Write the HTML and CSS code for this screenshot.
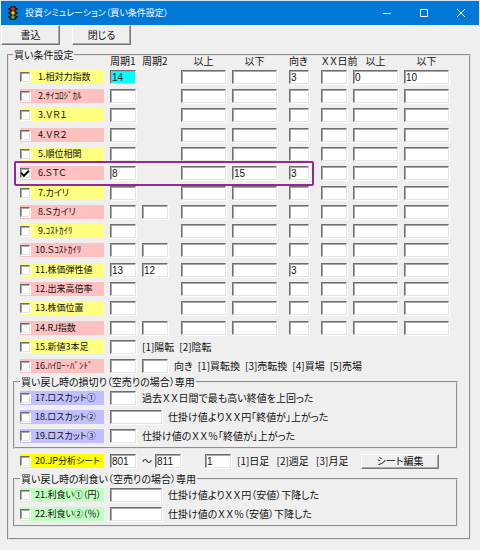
FILE: index.html
```html
<!DOCTYPE html>
<html lang="ja">
<head>
<meta charset="utf-8">
<title>投資シミュレーション（買い条件設定）</title>
<link rel="stylesheet" href="styles.css">
</head>
<body>
<header class="titlebar">
  <svg class="app-icon" viewBox="0 0 12 14" aria-hidden="true">
    <path d="M1 2h10v1L9 5H3L1 3zM1 6h10v1L9 9H3L1 7zM1 10h10v1l-2 2H3l-2-2z" fill="#222"/>
    <rect x="3" y="0" width="6" height="14" rx="1" fill="#2b2620"/>
    <circle cx="6" cy="3" r="1.7" fill="#e8281c"/>
    <circle cx="6" cy="7" r="1.7" fill="#f2d21c"/>
    <circle cx="6" cy="11" r="1.7" fill="#2fc34a"/>
  </svg>
  <h1>投資シミュレーション（買い条件設定）</h1>
  <div class="window-buttons">
    <button type="button" aria-label="最小化"><svg viewBox="0 0 10 10"><path d="M1 5.5h8"/></svg></button>
    <button type="button" aria-label="最大化"><svg viewBox="0 0 10 10"><path d="M1.5 1.5h7v7h-7z"/></svg></button>
    <button type="button" aria-label="閉じる"><svg viewBox="0 0 10 10"><path d="M1 1l8 8M9 1l-8 8"/></svg></button>
  </div>
</header>
<nav class="toolbar">
  <button type="button" class="btn">書込</button>
  <button type="button" class="btn">閉じる</button>
</nav>
<main>
<fieldset class="conditions">
  <legend>買い条件設定</legend>
  <div class="row head">
    <span class="p1">周期1</span><span class="p2">周期2</span><span class="lo">以上</span><span class="hi">以下</span><span class="dir">向き</span><span class="ago">ＸＸ日前</span><span class="lo2">以上</span><span class="hi2">以下</span>
  </div>
  <div class="rows main-rows">
    <div class="row">
      <label class="tag short yellow"><input type="checkbox">1.相対力指数</label>
      <input class="p1 active" aria-label="周期1" value="14"><input class="lo" aria-label="以上"><input class="hi" aria-label="以下"><input class="dir" aria-label="向き" value="3"><input class="ago" aria-label="XX日前"><input class="lo2" aria-label="以上" value="0"><input class="hi2" aria-label="以下" value="10">
    </div>
    <div class="row">
      <label class="tag short pink"><input type="checkbox">2.ｻｲｺﾛｼﾞｶﾙ</label>
      <input class="p1" aria-label="周期1"><input class="lo" aria-label="以上"><input class="hi" aria-label="以下"><input class="dir" aria-label="向き"><input class="ago" aria-label="XX日前"><input class="lo2" aria-label="以上"><input class="hi2" aria-label="以下">
    </div>
    <div class="row">
      <label class="tag short yellow"><input type="checkbox">3.ＶＲ１</label>
      <input class="p1" aria-label="周期1"><input class="lo" aria-label="以上"><input class="hi" aria-label="以下"><input class="dir" aria-label="向き"><input class="ago" aria-label="XX日前"><input class="lo2" aria-label="以上"><input class="hi2" aria-label="以下">
    </div>
    <div class="row">
      <label class="tag short pink"><input type="checkbox">4.ＶＲ２</label>
      <input class="p1" aria-label="周期1"><input class="lo" aria-label="以上"><input class="hi" aria-label="以下"><input class="dir" aria-label="向き"><input class="ago" aria-label="XX日前"><input class="lo2" aria-label="以上"><input class="hi2" aria-label="以下">
    </div>
    <div class="row">
      <label class="tag short yellow"><input type="checkbox">5.順位相関</label>
      <input class="p1" aria-label="周期1"><input class="lo" aria-label="以上"><input class="hi" aria-label="以下"><input class="dir" aria-label="向き"><input class="ago" aria-label="XX日前"><input class="lo2" aria-label="以上"><input class="hi2" aria-label="以下">
    </div>
    <div class="row marked">
      <label class="tag short pink"><input type="checkbox" checked>6.ＳＴＣ</label>
      <input class="p1" aria-label="周期1" value="8"><input class="lo" aria-label="以上"><input class="hi" aria-label="以下" value="15"><input class="dir" aria-label="向き" value="3"><input class="ago" aria-label="XX日前"><input class="lo2" aria-label="以上"><input class="hi2" aria-label="以下">
    </div>
    <div class="row">
      <label class="tag short yellow"><input type="checkbox">7.カイリ</label>
      <input class="p1" aria-label="周期1"><input class="lo" aria-label="以上"><input class="hi" aria-label="以下"><input class="dir" aria-label="向き"><input class="ago" aria-label="XX日前"><input class="lo2" aria-label="以上"><input class="hi2" aria-label="以下">
    </div>
    <div class="row">
      <label class="tag short pink"><input type="checkbox">8.Ｓカイリ</label>
      <input class="p1" aria-label="周期1"><input class="p2" aria-label="周期2"><input class="lo" aria-label="以上"><input class="hi" aria-label="以下"><input class="dir" aria-label="向き"><input class="ago" aria-label="XX日前"><input class="lo2" aria-label="以上"><input class="hi2" aria-label="以下">
    </div>
    <div class="row">
      <label class="tag short yellow"><input type="checkbox">9.ｺｽﾄｶｲﾘ</label>
      <input class="p1" aria-label="周期1"><input class="lo" aria-label="以上"><input class="hi" aria-label="以下"><input class="dir" aria-label="向き"><input class="ago" aria-label="XX日前"><input class="lo2" aria-label="以上"><input class="hi2" aria-label="以下">
    </div>
    <div class="row">
      <label class="tag pink"><input type="checkbox">10.Ｓｺｽﾄｶｲﾘ</label>
      <input class="p1" aria-label="周期1"><input class="p2" aria-label="周期2"><input class="lo" aria-label="以上"><input class="hi" aria-label="以下"><input class="dir" aria-label="向き"><input class="ago" aria-label="XX日前"><input class="lo2" aria-label="以上"><input class="hi2" aria-label="以下">
    </div>
    <div class="row">
      <label class="tag yellow"><input type="checkbox">11.株価弾性値</label>
      <input class="p1" aria-label="周期1" value="13"><input class="p2" aria-label="周期2" value="12"><input class="lo" aria-label="以上"><input class="hi" aria-label="以下"><input class="dir" aria-label="向き" value="3"><input class="ago" aria-label="XX日前"><input class="lo2" aria-label="以上"><input class="hi2" aria-label="以下">
    </div>
    <div class="row">
      <label class="tag pink"><input type="checkbox">12.出来高倍率</label>
      <input class="p1" aria-label="周期1"><input class="lo" aria-label="以上"><input class="hi" aria-label="以下"><input class="dir" aria-label="向き"><input class="ago" aria-label="XX日前"><input class="lo2" aria-label="以上"><input class="hi2" aria-label="以下">
    </div>
    <div class="row">
      <label class="tag yellow"><input type="checkbox">13.株価位置</label>
      <input class="p1" aria-label="周期1"><input class="lo" aria-label="以上"><input class="hi" aria-label="以下"><input class="dir" aria-label="向き"><input class="ago" aria-label="XX日前"><input class="lo2" aria-label="以上"><input class="hi2" aria-label="以下">
    </div>
    <div class="row">
      <label class="tag pink"><input type="checkbox">14.RJ指数</label>
      <input class="p1" aria-label="周期1"><input class="p2" aria-label="周期2"><input class="lo" aria-label="以上"><input class="hi" aria-label="以下"><input class="dir" aria-label="向き"><input class="ago" aria-label="XX日前"><input class="lo2" aria-label="以上"><input class="hi2" aria-label="以下">
    </div>
    <div class="line">
      <label class="tag yellow"><input type="checkbox">15.新値3本足</label>
      <input class="narrow" aria-label="新値3本足"><span>[1]陽転&ensp;[2]陰転</span>
    </div>
    <div class="line">
      <label class="tag pink"><input type="checkbox">16.ﾊｲﾛｰ･ﾊﾞﾝﾄﾞ</label>
      <input class="narrow" aria-label="周期1"><input class="narrow" aria-label="周期2"><span>向き&ensp;[1]買転換&ensp;[3]売転換&ensp;[4]買場&ensp;[5]売場</span>
    </div>
  </div>

  <fieldset class="group">
    <legend>買い戻し時の損切り（空売りの場合）専用</legend>
    <div class="rows">
      <div class="line">
        <label class="tag blue"><input type="checkbox">17.ロスカット①</label>
        <input class="narrow" aria-label="ロスカット① 日数"><span>過去ＸＸ日間で最も高い終値を上回った</span>
      </div>
      <div class="line">
        <label class="tag blue"><input type="checkbox">18.ロスカット②</label>
        <input class="wide" aria-label="ロスカット② 円"><span>仕掛け値よりＸＸ円「終値が」上がった</span>
      </div>
      <div class="line">
        <label class="tag blue"><input type="checkbox">19.ロスカット③</label>
        <input class="narrow" aria-label="ロスカット③ %"><span>仕掛け値のＸＸ％「終値が」上がった</span>
      </div>
    </div>
  </fieldset>

  <div class="line sheet">
    <label class="tag bright"><input type="checkbox">20.JP分析シート</label>
    <input class="narrow" aria-label="開始シート" value="801"><span class="tilde">～</span><input class="narrow" aria-label="終了シート" value="811">
    <input class="narrow period" aria-label="足の種類" value="1"><span>[1]日足&ensp; [2]週足&ensp; [3]月足</span>
    <button type="button" class="btn">シート編集</button>
  </div>

  <fieldset class="group">
    <legend>買い戻し時の利食い（空売りの場合）専用</legend>
    <div class="rows">
      <div class="line">
        <label class="tag green"><input type="checkbox">21.利食い①（円）</label>
        <input class="wide" aria-label="利食い① 円"><span>仕掛け値よりＸＸ円（安値）下降した</span>
      </div>
      <div class="line">
        <label class="tag green"><input type="checkbox">22.利食い②（％）</label>
        <input class="wide" aria-label="利食い② %"><span>仕掛け値のＸＸ％（安値）下降した</span>
      </div>
    </div>
  </fieldset>
</fieldset>
</main>
</body>
</html>
```
FILE: styles.css
```css
* { box-sizing: border-box; }

body {
  margin: 0;
  background: #efefef;
  color: #111;
  font: 10px/12px "Noto Sans CJK JP", sans-serif;
  font-feature-settings: "palt";
  white-space: nowrap;
}

button, input { font: inherit; color: inherit; font-feature-settings: inherit; }

/* Title bar */
.titlebar {
  display: flex;
  align-items: center;
  height: 25px;
  margin: 0 1px;
  padding-left: 6px;
  border-top: 1px solid #cfe3f5;
  background: #0078d7;
  color: #fff;
}
.app-icon { width: 12px; height: 14px; }
.titlebar h1 { margin: 0 0 0 6px; font-size: 9px; font-weight: 400; }
.window-buttons { display: flex; margin-left: auto; }
.window-buttons button {
  display: grid;
  place-items: center;
  width: 37px;
  height: 24px;
  padding: 0;
  border: 0;
  background: none;
}
.window-buttons svg { width: 10px; height: 10px; fill: none; stroke: #fff; }

/* Raised buttons */
.btn {
  padding: 0;
  border: 1px solid;
  border-color: #fff #777 #777 #fff;
  background: #efefef;
  box-shadow: inset -1px -1px #a8a8a8;
}
.toolbar { display: flex; gap: 12px; padding-left: 1px; }
.toolbar .btn { width: 59px; height: 20px; }

/* Group frames */
main { padding: 4px 9px 8px 7px; }
fieldset {
  min-width: 0;
  margin: 0;
  padding: 0;
  border: 2px groove #e4e4e4;
}
legend { padding: 0 1px; }
.conditions { padding: 0 11px 11px 4px; }
.group { padding: 0 0 2px 5px; }

/* Condition rows */
.rows { display: grid; grid-auto-rows: 1fr; }
.main-rows { min-height: 309px; padding-left: 7px; }
.group .rows { grid-auto-rows: 19px; }
.row {
  display: grid;
  grid-template-columns: 84px 26px 33px 45px 51px 26px 26px 45px 45px;
  column-gap: 6px;
  align-items: center;
  position: relative;
}
.p1 { grid-column: 2; }
.p2 { grid-column: 3; }
.lo { grid-column: 4; }
.hi { grid-column: 5; }
.dir { grid-column: 6; }
.ago { grid-column: 7; }
.lo2 { grid-column: 8; }
.hi2 { grid-column: 9; }
.row input.p2 { width: 26px; }
.row input.hi { width: 45px; }
.row input.dir { width: 20px; }
.head { margin-top: -6px; padding-left: 7px; }
.head .lo, .head .lo2, .head .hi, .head .hi2 { text-align: center; }
.head .hi { margin-right: 6px; }

.line { display: flex; align-items: center; gap: 6px; }
.tag {
  display: flex;
  flex: none;
  align-items: center;
  gap: 5px;
  width: 84px;
  height: 14px;
  font-size: 9px;
}
.short { gap: 8px; }
.yellow { background: #ffff80; }
.pink { background: #ffc0c0; }
.blue { background: #c0c0ff; }
.green { background: #c0ffc0; }
.bright { background: #ffff00; }

input {
  flex: none;
  min-width: 0;
  width: 100%;
  height: 14px;
  margin: 0;
  padding: 1px 1px 0;
  border: 1px solid;
  border-color: #6e6e6e #e4e4e4 #e4e4e4 #6e6e6e;
  border-radius: 0;
  background: #fff;
  box-shadow: inset 1px 1px #a8a8a8, 1px 1px #fff;
  font-family: "Liberation Sans", sans-serif;
}
.narrow { width: 26px; }
.wide { width: 52px; }
.active { background: #00ffff; }

input[type="checkbox"] {
  appearance: none;
  display: grid;
  place-items: center;
  width: 10px;
  height: 10px;
  padding: 0;
}
input[type="checkbox"]:checked::before {
  content: "";
  width: 6px;
  height: 3px;
  margin-top: -1px;
  border: solid #000;
  border-width: 0 0 2px 2px;
  transform: rotate(-45deg);
}

.marked::after {
  content: "";
  position: absolute;
  inset: -3px 144px -3px -6px;
  border: 2px solid #932a93;
  border-radius: 2px;
  pointer-events: none;
}

.sheet { height: 24px; padding-left: 7px; }
.tilde { width: 10px; margin-right: -3px; }
.period { margin-left: 18px; }
.sheet .btn { width: 78px; height: 15px; margin-left: auto; margin-right: 19px; }
```
